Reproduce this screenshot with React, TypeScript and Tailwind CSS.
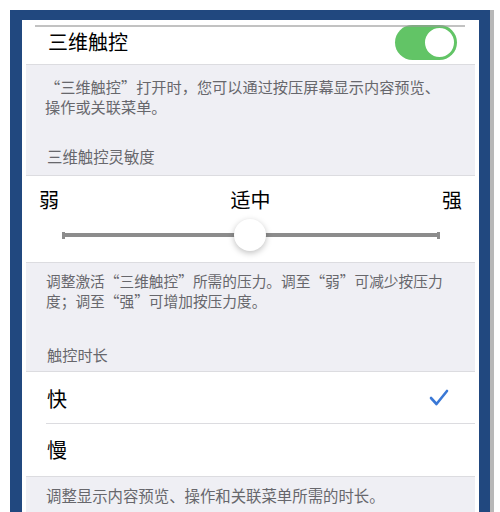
const FONT = { fontFamily: '"Noto Sans CJK SC", "Noto Sans", sans-serif' };

function Toggle() {
  return (
    <div className="w-[62px] h-[35px] rounded-full bg-[#62c466] flex items-center justify-end pr-[1px]">
      <div className="w-[33px] h-[33px] rounded-full bg-white border-2 border-[#62c466]" />
    </div>
  );
}

function Check() {
  return (
    <svg width="20" height="18" viewBox="0 0 20 18" fill="none">
      <polyline points="2,9 7.5,15 18,2" stroke="#3a78d6" strokeWidth="2.6" strokeLinecap="round" strokeLinejoin="round" />
    </svg>
  );
}

export default function App() {
  return (
    <div className="w-[500px] h-[512px] overflow-hidden bg-white pt-[10px] pl-[10px]" style={FONT}>
      <div className="w-[484px] h-[520px] bg-[#21487f] border-r-4 border-[#b8b8b8] pt-[10px] pl-[12px] pr-[11px]">
        <div className="relative h-full bg-white px-[4px] flex flex-col">
          <div className="absolute top-[5px] left-[13px] right-[14px] h-[2px] bg-[#9a9a9a] opacity-60" />

          {/* 三维触控 */}
          <div className="h-[45px] flex items-center justify-between pl-[22px] pr-[18px] border-b border-[#dcdce0]">
            <span className="text-[20px] leading-6 text-black">三维触控</span>
            <Toggle />
          </div>

          <div className="bg-[#efeff4] pt-[11px] pb-[9px] pl-[19px] text-[15.2px] leading-[20px] text-[#67676c]">
            <div className="whitespace-nowrap">“三维触控”打开时，您可以通过按压屏幕显示内容预览、</div>
            <div className="whitespace-nowrap">操作或关联菜单。</div>
            <div className="mt-[30px] pl-[2px] text-[15.4px]">三维触控灵敏度</div>
          </div>

          {/* slider */}
          <div className="h-[88px] bg-white border-y border-[#dcdce0] pt-[12px] flex flex-col">
            <div className="flex items-center justify-between px-[13px] text-[20px] leading-6 text-black">
              <span>弱</span>
              <span>适中</span>
              <span>强</span>
            </div>
            <div className="mt-[7px] pl-[36px] pr-[35px] relative h-[32px] flex items-center">
              <div className="w-[3px] h-[7px] bg-[#8c8c8c]" />
              <div className="flex-1 h-[4px] bg-[#8c8c8c]" />
              <div className="w-[3px] h-[7px] bg-[#8c8c8c]" />
              <div className="absolute left-[208px] top-0 w-[32px] h-[32px] rounded-full bg-white shadow-[0_2px_6px_rgba(0,0,0,0.25)]" />
            </div>
          </div>

          <div className="bg-[#efeff4] pt-[8px] pb-[7px] pl-[20px] text-[14.7px] leading-[20px] text-[#67676c]">
            <div className="whitespace-nowrap">调整激活“三维触控”所需的压力。调至“弱”可减少按压力</div>
            <div className="whitespace-nowrap">度；调至“强”可增加按压力度。</div>
            <div className="mt-[33px] pl-[1px] text-[15.2px]">触控时长</div>
          </div>

          {/* 快 / 慢 */}
          <div className="bg-white border-y border-[#dcdce0]">
            <div className="h-[51px] flex items-center justify-between pl-[21px] pr-[26px] text-[20px] text-black">
              <span className="mt-[3px]">快</span>
              <Check />
            </div>
            <div className="ml-[20px] h-px bg-[#dcdce0]" />
            <div className="h-[52px] flex items-center pl-[21px] text-[20px] text-black">
              <span>慢</span>
            </div>
          </div>

          <div className="flex-1 bg-[#efeff4] pt-[8px] pl-[20px] text-[15.4px] leading-[20px] text-[#67676c]">
            <div className="whitespace-nowrap">调整显示内容预览、操作和关联菜单所需的时长。</div>
          </div>
        </div>
      </div>
    </div>
  );
}
